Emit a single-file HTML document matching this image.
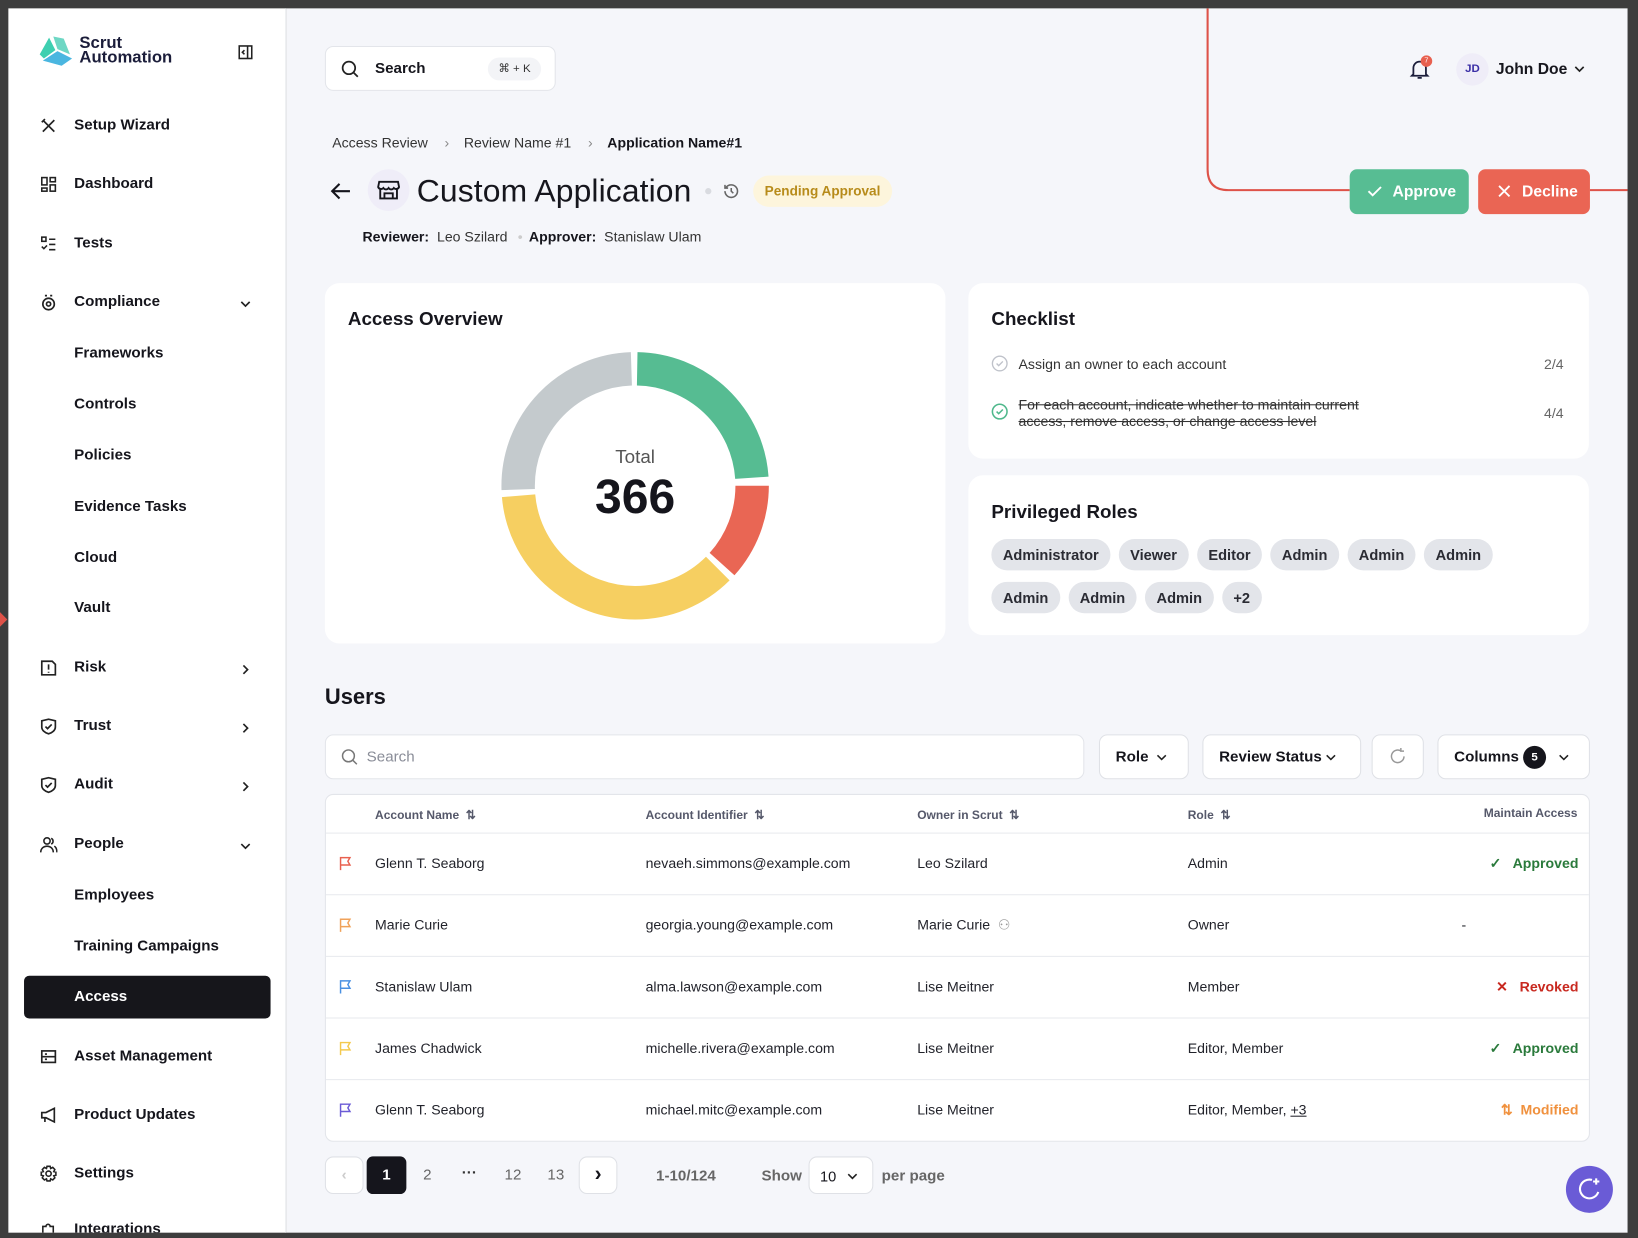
<!DOCTYPE html>
<html><head><meta charset="utf-8"><style>
*{box-sizing:border-box;margin:0;padding:0}
body{width:1638px;height:1238px;overflow:hidden;background:#3d3d3d;font-family:"Liberation Sans",sans-serif;color:#16161d}
#s{position:absolute;left:0;top:0;width:1568px;height:1185px;transform:scale(1.04464);transform-origin:0 0;background:#3d3d3d;overflow:hidden}
.a{position:absolute}
#side{left:8px;top:8px;width:266px;height:1172px;background:#fff;border-right:1px solid #ebecf0;overflow:hidden}
#main{left:274px;top:8px;width:1284px;height:1172px;background:#f5f6fa;overflow:hidden}
.ni{position:absolute;left:63px;font-size:14.5px;font-weight:700;color:#15151c;white-space:nowrap}
.ic{position:absolute;left:30px;width:17px;height:17px}
.chev{position:absolute;left:222px;width:10px;height:10px}
.card{position:absolute;background:#fff;border-radius:14px}
.chip{display:inline-block;background:#e3e5ea;border-radius:16px;padding:0 11px;height:30px;line-height:30px;font-size:14px;font-weight:700;color:#2a2b33;margin-right:8px}
.btn{position:absolute;background:#fff;border:1px solid #dfe1e6;border-radius:8px;font-size:14.5px;font-weight:700;color:#15151c}
.row{position:absolute;left:0;width:1210px;height:59px;border-top:1px solid #e8eaee;font-size:13.5px;color:#22232b}
.row span{position:absolute;top:21px;white-space:nowrap}
.th{position:absolute;top:12px;font-size:11.5px;color:#55586a;font-weight:700;white-space:nowrap}
</style></head><body><div id="s">

<div id="side" class="a">
  <svg class="a" style="left:29px;top:26px" width="34" height="30" viewBox="0 0 34 30"><path d="M10 2 L16 14 L5 22 L1 18 Z" fill="#3ecfb0"/><path d="M14 1 L24 3 L30 18 L18 13 Z" fill="#6ed7c4"/><path d="M4 24 L18 15 L32 22 L22 29 Z" fill="#4ab6e0"/></svg>
  <div class="a" style="left:68px;top:27px;font-size:16px;line-height:14px;font-weight:700;color:#1b1d3a">Scrut<br>Automation</div>
  <svg class="a" style="left:220px;top:35px" width="14" height="14" viewBox="0 0 14 14" fill="none" stroke="#222" stroke-width="1.5"><rect x="1" y="1" width="12" height="12"/><path d="M9 1v12M6 5l-2 2 2 2"/></svg>

  <svg class="ic" style="top:104px" viewBox="0 0 17 17" fill="none" stroke="#222" stroke-width="1.6"><path d="M3 3l11 11M14 3L3 14M2 5l3-3"/></svg><div class="ni" style="top:104px">Setup Wizard</div>
  <svg class="ic" style="top:160px" viewBox="0 0 17 17" fill="none" stroke="#222" stroke-width="1.5"><rect x="2" y="2" width="5" height="7"/><rect x="10" y="2" width="5" height="4"/><rect x="2" y="12" width="5" height="3"/><rect x="10" y="9" width="5" height="6"/></svg><div class="ni" style="top:160px">Dashboard</div>
  <svg class="ic" style="top:217px" viewBox="0 0 17 17" fill="none" stroke="#222" stroke-width="1.5"><rect x="2" y="2" width="4" height="4"/><path d="M9 4h6M9 9h6M9 14h6M2 11l2 2 3-3"/></svg><div class="ni" style="top:217px">Tests</div>
  <svg class="ic" style="top:273px" viewBox="0 0 17 17" fill="none" stroke="#222" stroke-width="1.6"><circle cx="8.5" cy="10" r="5.5"/><circle cx="8.5" cy="10" r="2"/><path d="M5 2h2M10 2h2"/></svg><div class="ni" style="top:273px">Compliance</div>
  <svg class="chev" style="top:278px" viewBox="0 0 10 10" fill="none" stroke="#222" stroke-width="1.6"><path d="M1 3l4 4 4-4"/></svg>
  <div class="ni" style="top:322px">Frameworks</div>
  <div class="ni" style="top:371px">Controls</div>
  <div class="ni" style="top:420px">Policies</div>
  <div class="ni" style="top:469px">Evidence Tasks</div>
  <div class="ni" style="top:518px">Cloud</div>
  <div class="ni" style="top:566px">Vault</div>
  <svg class="ic" style="top:623px" viewBox="0 0 17 17" fill="none" stroke="#222" stroke-width="1.6"><path d="M2 2h10l3 3v10H2z"/><path d="M8.5 5v5M8.5 12v1"/></svg><div class="ni" style="top:623px">Risk</div>
  <svg class="chev" style="top:628px" viewBox="0 0 10 10" fill="none" stroke="#222" stroke-width="1.6"><path d="M3 1l4 4-4 4"/></svg>
  <svg class="ic" style="top:679px" viewBox="0 0 17 17" fill="none" stroke="#222" stroke-width="1.6"><path d="M2 3l6.5-1.5L15 3v6c0 3-3 5.5-6.5 6.5C5 14.5 2 12 2 9z"/><path d="M5.5 8.5l2 2 4-4"/></svg><div class="ni" style="top:679px">Trust</div>
  <svg class="chev" style="top:684px" viewBox="0 0 10 10" fill="none" stroke="#222" stroke-width="1.6"><path d="M3 1l4 4-4 4"/></svg>
  <svg class="ic" style="top:735px" viewBox="0 0 17 17" fill="none" stroke="#222" stroke-width="1.6"><path d="M2 3l6.5-1.5L15 3v6c0 3-3 5.5-6.5 6.5C5 14.5 2 12 2 9z"/><path d="M5.5 8.5l2 2 4-4"/></svg><div class="ni" style="top:735px">Audit</div>
  <svg class="chev" style="top:740px" viewBox="0 0 10 10" fill="none" stroke="#222" stroke-width="1.6"><path d="M3 1l4 4-4 4"/></svg>
  <svg class="ic" style="top:792px" viewBox="0 0 17 17" fill="none" stroke="#222" stroke-width="1.5"><circle cx="7" cy="5" r="3"/><path d="M1 16c0-4 3-6 6-6s6 2 6 6M11 2.5a3 3 0 010 5.5M14 10c1.5 1 2.5 3 2.5 6"/></svg><div class="ni" style="top:792px">People</div>
  <svg class="chev" style="top:797px" viewBox="0 0 10 10" fill="none" stroke="#222" stroke-width="1.6"><path d="M1 3l4 4 4-4"/></svg>
  <div class="ni" style="top:841px">Employees</div>
  <div class="ni" style="top:890px">Training Campaigns</div>
  <div class="a" style="left:15px;top:926px;width:236px;height:41px;background:#16161b;border-radius:5px"></div>
  <div class="ni" style="top:938px;color:#fff">Access</div>
  <svg class="ic" style="top:995px" viewBox="0 0 17 17" fill="none" stroke="#222" stroke-width="1.6"><rect x="2" y="3" width="13" height="11"/><path d="M2 8.5h13M5 6h2M5 11h2"/></svg><div class="ni" style="top:995px">Asset Management</div>
  <svg class="ic" style="top:1051px" viewBox="0 0 17 17" fill="none" stroke="#222" stroke-width="1.6"><path d="M2 6h4l8-4v13l-8-4H2zM5 11v4"/></svg><div class="ni" style="top:1051px">Product Updates</div>
  <svg class="ic" style="top:1107px" viewBox="0 0 17 17" fill="none" stroke="#222" stroke-width="1.5"><circle cx="8.5" cy="8.5" r="2.5"/><path d="M7 1.5h3l.5 2 2-1 2 2-1 2 2 .5v3l-2 .5 1 2-2 2-2-1-.5 2H7l-.5-2-2 1-2-2 1-2-2-.5V7l2-.5-1-2 2-2 2 1z"/></svg><div class="ni" style="top:1107px">Settings</div>
  <svg class="ic" style="top:1161px" viewBox="0 0 17 17" fill="none" stroke="#222" stroke-width="1.5"><path d="M3 5h3a2 2 0 014 0h3v8H3z"/></svg><div class="ni" style="top:1161px">Integrations</div>
</div>

<div id="main" class="a">
  <div class="a" style="left:37px;top:36px;width:221px;height:43px;background:#fff;border:1px solid #e3e5ea;border-radius:8px"></div>
  <svg class="a" style="left:52px;top:49px" width="18" height="18" viewBox="0 0 18 18" fill="none" stroke="#222" stroke-width="1.7"><circle cx="8" cy="8" r="6"/><path d="M12.5 12.5l4 4"/></svg>
  <div class="a" style="left:85px;top:50px;font-size:14.5px;font-weight:700">Search</div>
  <div class="a" style="left:193px;top:47px;width:51px;height:22px;background:#f3f4f7;border-radius:11px;font-size:11px;line-height:22px;text-align:center;color:#333">⌘ + K</div>

  <svg class="a" style="left:1074px;top:47px" width="22" height="22" viewBox="0 0 22 22" fill="none" stroke="#1b1d3a" stroke-width="1.7"><path d="M5 16V10a6 6 0 0112 0v6l1.5 1.5h-15zM9 19.5h4"/></svg>
  <div class="a" style="left:1086px;top:45px;width:11px;height:11px;border-radius:50%;background:#e8604f;color:#fff;font-size:7px;line-height:11px;text-align:center">7</div>
  <div class="a" style="left:1120px;top:43px;width:31px;height:31px;border-radius:50%;background:#efedf8;color:#3b2fa6;font-size:11px;font-weight:700;line-height:31px;text-align:center">JD</div>
  <div class="a" style="left:1158px;top:50px;font-size:15px;font-weight:700">John Doe</div>
  <svg class="a" style="left:1232px;top:53px" width="12" height="10" viewBox="0 0 12 10" fill="none" stroke="#222" stroke-width="1.6"><path d="M2 3l4 4 4-4"/></svg>

  <svg class="a" style="left:0;top:0" width="1284" height="300" fill="none" stroke="#de5248" stroke-width="2"><path d="M882 -10V154q0 20 20 20H1018"/><path d="M1248 174H1290"/></svg>
  <div class="a" style="left:1018px;top:154px;width:114px;height:43px;background:#57bd93;border-radius:7px;color:#fff;font-size:15px;font-weight:700;line-height:43px;padding-left:41px">Approve</div>
  <svg class="a" style="left:1034px;top:167px" width="16" height="16" viewBox="0 0 16 16" fill="none" stroke="#fff" stroke-width="1.8"><path d="M2 8l4 4 8-8"/></svg>
  <div class="a" style="left:1141px;top:154px;width:107px;height:43px;background:#ea6554;border-radius:7px;color:#fff;font-size:15px;font-weight:700;line-height:43px;padding-left:42px">Decline</div>
  <svg class="a" style="left:1159px;top:168px" width="14" height="14" viewBox="0 0 14 14" fill="none" stroke="#fff" stroke-width="1.8"><path d="M2 2l10 10M12 2L2 12"/></svg>

  <div class="a" style="left:44px;top:121px;font-size:13.5px;color:#333;white-space:nowrap">Access Review<span style="margin:0 14px 0 16px;color:#888">›</span>Review Name #1<span style="margin:0 14px 0 16px;color:#888">›</span><b style="color:#15151c">Application Name#1</b></div>
  <svg class="a" style="left:40px;top:163px" width="24" height="24" viewBox="0 0 24 24" fill="none" stroke="#15151c" stroke-width="2"><path d="M21 12H4M11 5l-7 7 7 7"/></svg>
  <div class="a" style="left:78px;top:154px;width:40px;height:40px;border-radius:50%;background:#efedf8"></div>
  <svg class="a" style="left:86px;top:162px" width="24" height="24" viewBox="0 0 24 24" fill="none" stroke="#15151c" stroke-width="1.8"><path d="M4 10v10h16V10M3 4h18l1 5a3 3 0 01-5 1 3 3 0 01-5 0 3 3 0 01-5 0 3 3 0 01-5-1z"/><path d="M8 20v-5h8v5"/></svg>
  <div class="a" style="left:125px;top:158px;font-size:30.5px;font-weight:500;white-space:nowrap;letter-spacing:0.1px">Custom Application</div>
  <div class="a" style="left:401px;top:172px;width:6px;height:6px;border-radius:50%;background:#d9dbe0"></div>
  <svg class="a" style="left:417px;top:166px" width="18" height="18" viewBox="0 0 18 18" fill="none" stroke="#666" stroke-width="1.5"><path d="M3 9a6 6 0 106-6 6 6 0 00-5 2.5M3 3v3h3M9 6v3l2 2"/></svg>
  <div class="a" style="left:447px;top:160px;height:30px;padding:0 11px;border-radius:15px;background:#fdf5dc;color:#b78b1a;font-size:13px;font-weight:700;line-height:30px">Pending Approval</div>
  <div class="a" style="left:73px;top:211px;font-size:13.5px;color:#333;white-space:nowrap"><b style="color:#15151c">Reviewer:</b>&nbsp; Leo Szilard <span style="color:#ccc;margin:0 6px">•</span><b style="color:#15151c">Approver:</b>&nbsp; Stanislaw Ulam</div>

  <div class="card" style="left:37px;top:263px;width:594px;height:345px"></div>
  <div class="a" style="left:59px;top:287px;font-size:18px;font-weight:700">Access Overview</div>
  <svg class="a" style="left:194px;top:317px" width="280" height="280" viewBox="0 0 280 280">
    <g transform="rotate(-90 140 140)" fill="none" stroke-width="32">
      <circle cx="140" cy="140" r="112" stroke="#56bc92" stroke-dasharray="166.2 600" stroke-dashoffset="-2"/>
      <circle cx="140" cy="140" r="112" stroke="#e96654" stroke-dasharray="82.1 700" stroke-dashoffset="-175.9"/>
      <circle cx="140" cy="140" r="112" stroke="#f6cf61" stroke-dasharray="254.1 700" stroke-dashoffset="-263.9"/>
      <circle cx="140" cy="140" r="112" stroke="#c4cacd" stroke-dasharray="175.9 700" stroke-dashoffset="-523.9"/>
    </g>
    <text x="140" y="118" text-anchor="middle" font-family="Liberation Sans" font-size="18" fill="#555">Total</text>
    <text x="140" y="166" text-anchor="middle" font-family="Liberation Sans" font-size="46" font-weight="700" fill="#15151c">366</text>
  </svg>

  <div class="card" style="left:653px;top:263px;width:594px;height:168px"></div>
  <div class="a" style="left:675px;top:287px;font-size:18px;font-weight:700">Checklist</div>
  <svg class="a" style="left:675px;top:332px" width="16" height="16" viewBox="0 0 16 16" fill="none" stroke="#bfc2ca" stroke-width="1.3"><circle cx="8" cy="8" r="7"/><path d="M5 8l2 2 4-4"/></svg>
  <div class="a" style="left:701px;top:333px;font-size:13.5px;color:#333">Assign an owner to each account</div>
  <div class="a" style="left:1204px;top:333px;font-size:13.5px;color:#666">2/4</div>
  <svg class="a" style="left:675px;top:378px" width="16" height="16" viewBox="0 0 16 16" fill="none" stroke="#4fb88c" stroke-width="1.5"><circle cx="8" cy="8" r="7"/><path d="M5 8l2 2 4-4"/></svg>
  <div class="a" style="left:701px;top:372px;font-size:13.5px;line-height:16px;color:#333;text-decoration:line-through">For each account, indicate whether to maintain current<br>access, remove access, or change access level</div>
  <div class="a" style="left:1204px;top:380px;font-size:13.5px;color:#666">4/4</div>

  <div class="card" style="left:653px;top:447px;width:594px;height:153px"></div>
  <div class="a" style="left:675px;top:472px;font-size:18px;font-weight:700">Privileged Roles</div>
  <div class="a" style="left:675px;top:508px;width:560px"><span class="chip">Administrator</span><span class="chip">Viewer</span><span class="chip">Editor</span><span class="chip">Admin</span><span class="chip">Admin</span><span class="chip">Admin</span></div>
  <div class="a" style="left:675px;top:549px;width:560px"><span class="chip">Admin</span><span class="chip">Admin</span><span class="chip">Admin</span><span class="chip">+2</span></div>

  <div class="a" style="left:37px;top:648px;font-size:21px;font-weight:700">Users</div>
  <div class="a" style="left:37px;top:695px;width:727px;height:43px;background:#fff;border:1px solid #e3e5ea;border-radius:8px"></div>
  <svg class="a" style="left:52px;top:708px" width="17" height="17" viewBox="0 0 18 18" fill="none" stroke="#777" stroke-width="1.5"><circle cx="8" cy="8" r="6"/><path d="M12.5 12.5l4 4"/></svg>
  <div class="a" style="left:77px;top:709px;font-size:14.5px;color:#8a8d98">Search</div>
  <div class="btn" style="left:778px;top:695px;width:86px;height:43px;padding:13px 0 0 15px">Role</div>
  <svg class="a" style="left:833px;top:712px" width="10" height="10" viewBox="0 0 10 10" fill="none" stroke="#222" stroke-width="1.5"><path d="M1 3l4 4 4-4"/></svg>
  <div class="btn" style="left:877px;top:695px;width:152px;height:43px;padding:13px 0 0 15px">Review Status</div>
  <svg class="a" style="left:995px;top:712px" width="10" height="10" viewBox="0 0 10 10" fill="none" stroke="#222" stroke-width="1.5"><path d="M1 3l4 4 4-4"/></svg>
  <div class="btn" style="left:1039px;top:695px;width:50px;height:43px"></div>
  <svg class="a" style="left:1055px;top:707px" width="18" height="18" viewBox="0 0 18 18" fill="none" stroke="#999" stroke-width="1.4"><path d="M15 9a6 6 0 11-3-5.2M12 1v3h3"/></svg>
  <div class="btn" style="left:1102px;top:695px;width:146px;height:43px;padding:13px 0 0 15px">Columns</div>
  <div class="a" style="left:1184px;top:706px;width:22px;height:22px;border-radius:50%;background:#15151c;color:#fff;font-size:11px;line-height:22px;text-align:center;font-weight:700">5</div>
  <svg class="a" style="left:1218px;top:712px" width="10" height="10" viewBox="0 0 10 10" fill="none" stroke="#222" stroke-width="1.5"><path d="M1 3l4 4 4-4"/></svg>

  <div class="a" style="left:37px;top:752px;width:1211px;height:333px;background:#fff;border:1px solid #e3e5ea;border-radius:8px;overflow:hidden">
    <div class="th" style="left:47px">Account Name &nbsp;⇅</div>
    <div class="th" style="left:306px">Account Identifier &nbsp;⇅</div>
    <div class="th" style="left:566px">Owner in Scrut &nbsp;⇅</div>
    <div class="th" style="left:825px">Role &nbsp;⇅</div>
    <div class="th" style="right:11px">Maintain Access</div>

    <div class="row" style="top:36px"><svg class="a" style="left:12px;top:22px" width="13" height="14" viewBox="0 0 13 14" fill="none" stroke="#e8604f" stroke-width="1.4"><path d="M2 13V1h9l-2 3.5 2 3.5H2"/></svg><span style="left:47px">Glenn T. Seaborg</span><span style="left:306px">nevaeh.simmons@example.com</span><span style="left:566px">Leo Szilard</span><span style="left:825px">Admin</span><span style="right:11px;color:#2a7a3b;font-weight:700">✓&nbsp;&nbsp; Approved</span></div>
    <div class="row" style="top:95px"><svg class="a" style="left:12px;top:22px" width="13" height="14" viewBox="0 0 13 14" fill="none" stroke="#f0a25a" stroke-width="1.4"><path d="M2 13V1h9l-2 3.5 2 3.5H2"/></svg><span style="left:47px">Marie Curie</span><span style="left:306px">georgia.young@example.com</span><span style="left:566px">Marie Curie &nbsp;<span style="position:static;color:#999">⚇</span></span><span style="left:825px">Owner</span><span style="left:1087px">-</span></div>
    <div class="row" style="top:154px"><svg class="a" style="left:12px;top:22px" width="13" height="14" viewBox="0 0 13 14" fill="none" stroke="#4a90e2" stroke-width="1.4"><path d="M2 13V1h9l-2 3.5 2 3.5H2"/></svg><span style="left:47px">Stanislaw Ulam</span><span style="left:306px">alma.lawson@example.com</span><span style="left:566px">Lise Meitner</span><span style="left:825px">Member</span><span style="right:11px;color:#c8281f;font-weight:700">✕&nbsp;&nbsp; Revoked</span></div>
    <div class="row" style="top:213px"><svg class="a" style="left:12px;top:22px" width="13" height="14" viewBox="0 0 13 14" fill="none" stroke="#f4c94e" stroke-width="1.4"><path d="M2 13V1h9l-2 3.5 2 3.5H2"/></svg><span style="left:47px">James Chadwick</span><span style="left:306px">michelle.rivera@example.com</span><span style="left:566px">Lise Meitner</span><span style="left:825px">Editor, Member</span><span style="right:11px;color:#2a7a3b;font-weight:700">✓&nbsp;&nbsp; Approved</span></div>
    <div class="row" style="top:272px"><svg class="a" style="left:12px;top:22px" width="13" height="14" viewBox="0 0 13 14" fill="none" stroke="#6b5bd6" stroke-width="1.4"><path d="M2 13V1h9l-2 3.5 2 3.5H2"/></svg><span style="left:47px">Glenn T. Seaborg</span><span style="left:306px">michael.mitc@example.com</span><span style="left:566px">Lise Meitner</span><span style="left:825px">Editor, Member, <u>+3</u></span><span style="right:11px;color:#f0913e;font-weight:700">⇅&nbsp; Modified</span></div>
  </div>

  <div class="btn" style="left:37px;top:1099px;width:37px;height:36px;color:#ccc;text-align:center;line-height:34px">‹</div>
  <div class="a" style="left:77px;top:1099px;width:38px;height:36px;background:#15151c;border-radius:6px;color:#fff;font-size:14.5px;font-weight:700;text-align:center;line-height:36px">1</div>
  <div class="a" style="left:131px;top:1109px;font-size:14.5px;color:#666">2</div>
  <div class="a" style="left:168px;top:1107px;font-size:14.5px;color:#333;font-weight:700">···</div>
  <div class="a" style="left:209px;top:1109px;font-size:14.5px;color:#666">12</div>
  <div class="a" style="left:250px;top:1109px;font-size:14.5px;color:#666">13</div>
  <div class="btn" style="left:280px;top:1099px;width:37px;height:36px;text-align:center;line-height:32px;font-size:20px">›</div>
  <div class="a" style="left:354px;top:1110px;font-size:14.5px;color:#666;font-weight:700">1-10/124</div>
  <div class="a" style="left:455px;top:1110px;font-size:14.5px;color:#666;font-weight:700">Show</div>
  <div class="btn" style="left:500px;top:1099px;width:62px;height:36px;padding:10px 0 0 10px;font-weight:400;font-size:14px">10</div>
  <svg class="a" style="left:537px;top:1113px" width="10" height="10" viewBox="0 0 10 10" fill="none" stroke="#222" stroke-width="1.5"><path d="M1 3l4 4 4-4"/></svg>
  <div class="a" style="left:570px;top:1110px;font-size:14.5px;color:#666;font-weight:700">per page</div>

  <div class="a" style="left:1225px;top:1108px;width:45px;height:45px;border-radius:50%;background:#6a5bd6"></div>
  <svg class="a" style="left:1235px;top:1118px" width="25" height="25" viewBox="0 0 25 25" fill="none" stroke="#fff" stroke-width="2"><path d="M15 3.5A9 9 0 1021 15"/><path d="M19 2v6M16 5h6"/></svg>
</div>
<svg class="a" style="left:0;top:586px" width="8" height="14" viewBox="0 0 8 14"><path d="M0 0l7 7-7 7z" fill="#de5248"/></svg>
</div></body></html>
